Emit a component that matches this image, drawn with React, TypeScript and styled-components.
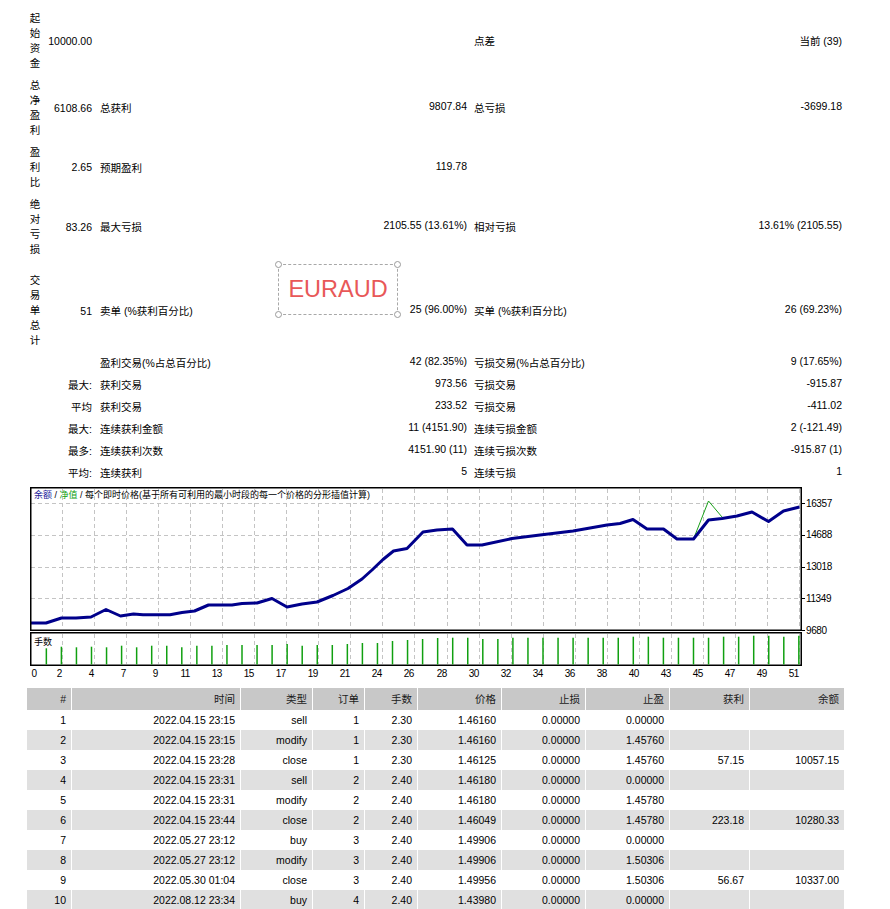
import React from "react";
import styled, { createGlobalStyle } from "styled-components";

const GlobalStyle = createGlobalStyle`
  html, body { margin: 0; padding: 0; background: #ffffff; }
  body {
    font-family: "Liberation Sans", "Noto Sans CJK SC", sans-serif;
    font-size: 10.5px;
    color: #000000;
  }
`;

const Page = styled.div`
  position: relative;
  width: 890px;
  padding-top: 7px;
`;

const Stats = styled.div`
  padding-left: 29px;
`;

const StatRow = styled.div<{ $gap?: number }>`
  display: grid;
  grid-template-columns: 12px 51px 375px 375px;
  align-items: center;
  min-height: 22px;
  margin-top: ${(p) => p.$gap ?? 0}px;
`;

const StackLabel = styled.div`
  line-height: 15px;
  padding: 3.5px 0;
  text-align: center;
  word-break: break-all;
`;

const Value = styled.div`
  text-align: right;
  white-space: nowrap;
`;

const Pair = styled.div<{ $pad: number }>`
  display: flex;
  justify-content: space-between;
  padding-left: ${(p) => p.$pad}px;
  white-space: nowrap;
`;

const Annotation = styled.div`
  position: absolute;
  left: 278px;
  top: 264px;
  width: 118px;
  height: 49px;
  border: 1px dashed #a8a8a8;
  display: flex;
  align-items: center;
  justify-content: center;
  font-family: "Liberation Sans", sans-serif;
  font-size: 23.5px;
  color: #e85858;
`;

const Handle = styled.span<{ $x: "l" | "r"; $y: "t" | "b" }>`
  position: absolute;
  width: 7px;
  height: 7px;
  border-radius: 50%;
  border: 1.3px solid #9a9a9a;
  background: #fff;
  box-sizing: border-box;
  ${(p) => (p.$x === "l" ? "left: -4px;" : "right: -4px;")}
  ${(p) => (p.$y === "t" ? "top: -4px;" : "bottom: -4px;")}
`;

const ChartSvg = styled.svg`
  display: block;
  width: 890px;
  height: 204px;
  font-family: "Liberation Sans", "Noto Sans CJK SC", sans-serif;
`;

const Table = styled.table`
  margin-left: 27px;
  border-collapse: separate;
  border-spacing: 0;
  width: 818px;
  table-layout: fixed;
  font-size: 10.5px;
`;

const Th = styled.th`
  background: #c8c8c8;
  line-height: 22px;
  height: 22px;
  font-weight: normal;
  text-align: right;
  padding: 0 5px 0 0;
  border-right: 1px solid #ffffff;
  color: #1a1a1a;
`;

const Tr = styled.tr<{ $alt: boolean }>`
  background: ${(p) => (p.$alt ? "#e0e0e0" : "#ffffff")};
`;

const Td = styled.td`
  line-height: 20px;
  height: 20px;
  padding: 0 5px 0 0;
  text-align: right;
  border-right: 1px solid #ffffff;
  white-space: nowrap;
`;

type StatDef = {
  stack?: string;
  value?: string;
  a: [string, string];
  b: [string, string];
  gap?: number;
};

const stats: StatDef[] = [
  { stack: "起始资金", value: "10000.00", a: ["", ""], b: ["点差", "当前 (39)"] },
  { stack: "总净盈利", value: "6108.66", a: ["总获利", "9807.84"], b: ["总亏损", "-3699.18"] },
  { stack: "盈利比", value: "2.65", a: ["预期盈利", "119.78"], b: ["", ""] },
  { stack: "绝对亏损", value: "83.26", a: ["最大亏损", "2105.55 (13.61%)"], b: ["相对亏损", "13.61% (2105.55)"] },
  { stack: "交易单总计", value: "51", a: ["卖单 (%获利百分比)", "25 (96.00%)"], b: ["买单 (%获利百分比)", "26 (69.23%)"], gap: 9.5 },
  { value: "", a: ["盈利交易(%占总百分比)", "42 (82.35%)"], b: ["亏损交易(%占总百分比)", "9 (17.65%)"] },
  { value: "最大:", a: ["获利交易", "973.56"], b: ["亏损交易", "-915.87"] },
  { value: "平均", a: ["获利交易", "233.52"], b: ["亏损交易", "-411.02"] },
  { value: "最大:", a: ["连续获利金额", "11 (4151.90)"], b: ["连续亏损金额", "2 (-121.49)"] },
  { value: "最多:", a: ["连续获利次数", "4151.90 (11)"], b: ["连续亏损次数", "-915.87 (1)"] },
  { value: "平均:", a: ["连续获利", "5"], b: ["连续亏损", "1"] },
];

const balance: [number, number][] = [
  [30, 623], [46, 623], [61.5, 618], [76, 618], [91, 617], [106, 609.5], [120.5, 616],
  [133.5, 614], [143, 614.8], [170, 614.8], [182, 612.5], [194.5, 611], [208.5, 605],
  [232, 605], [242, 603.5], [257, 603], [272, 598.5], [287, 607], [302, 604], [317, 602],
  [333, 595.5], [348, 588.5], [362, 579], [372, 570], [383, 559.5], [393.5, 551],
  [407, 548.5], [423, 532], [437, 530], [452.5, 529], [467, 545], [482, 545],
  [512, 538.5], [540, 535], [573, 531], [607, 525], [620, 523.5], [633, 519.5],
  [647, 529], [663.5, 529], [677, 539], [693.5, 539], [708.5, 520], [722, 518.5],
  [737, 516], [752, 512], [768.5, 521.5], [783.5, 511], [799.5, 507],
];

const equitySpike: [number, number][] = [[693.5, 539], [708.5, 501], [722, 517]];

const barTops: number[] = [
  648.3, 646.7, 647.3, 646.7, 647.3, 645.7, 647.3, 645.7, 645.7, 647.3, 645.7, 645.7, 645,
  645, 645, 645, 644, 645.7, 645, 645, 644, 643, 643, 641, 640, 639, 638,
  637.7, 637.7, 639, 639, 637.7, 637.7, 637.7, 637.7, 637.7, 637.7, 637.7, 637.7, 636.7,
  636.7, 637.7, 637.7, 637.7, 637.7, 636.7, 636.7, 635.7, 635.7, 636.7, 635.7,
];

const xLabels = ["2", "4", "7", "9", "11", "13", "15", "17", "19", "21", "24", "26", "28", "30", "32", "34", "36", "38", "40", "43", "45", "47", "49", "51"];

const yLabels: [string, number][] = [
  ["16357", 503],
  ["14688", 534.75],
  ["13018", 566.5],
  ["11349", 598.25],
  ["9680", 630],
];

const gridX = (k: number) => Math.round(30 + 32.04 * k) + 0.5;

const BalanceChart = () => (
  <ChartSvg viewBox="0 484 890 204">
    {yLabels.slice(0, 4).map(([, y]) => (
      <line key={`h${y}`} x1={31} x2={800} y1={Math.round(y) + 0.5} y2={Math.round(y) + 0.5} stroke="#c4c4c4" strokeDasharray="4 3" />
    ))}
    {xLabels.map((_, i) => (
      <g key={`v${i}`}>
        <line x1={gridX(i + 1)} x2={gridX(i + 1)} y1={489} y2={629} stroke="#c4c4c4" strokeDasharray="4 3" />
        <line x1={gridX(i + 1)} x2={gridX(i + 1)} y1={634} y2={664} stroke="#c4c4c4" strokeDasharray="4 3" />
      </g>
    ))}
    <text x={34} y={498} fontSize={9} fill="#000">
      <tspan fill="#1a1a9a">余额</tspan>
      <tspan> / </tspan>
      <tspan fill="#10a010">净值</tspan>
      <tspan> / 每个即时价格(基于所有可利用的最小时段的每一个价格的分形插值计算)</tspan>
    </text>
    <polyline points={equitySpike.map((p) => p.join(",")).join(" ")} fill="none" stroke="#1aa01a" strokeWidth={1} />
    <polyline points={balance.map((p) => p.join(",")).join(" ")} fill="none" stroke="#00008b" strokeWidth={3} strokeLinejoin="round" />
    <rect x={30.75} y={487.75} width={770.5} height={142.5} fill="none" stroke="#000" strokeWidth={1.5} />
    <rect x={30.75} y={632.75} width={770.5} height={32.5} fill="none" stroke="#000" strokeWidth={1.5} />
    <text x={34} y={645} fontSize={9} fill="#000">手数</text>
    {barTops.map((t, i) => {
      const x = 31.3 + 15.05 * (i + 1);
      return <line key={`b${i}`} x1={x} x2={x} y1={t} y2={664.5} stroke="#10a010" strokeWidth={1.5} />;
    })}
    {yLabels.map(([label, y]) => (
      <g key={label}>
        <line x1={802} x2={805} y1={Math.round(y) + 0.5} y2={Math.round(y) + 0.5} stroke="#000" />
        <text x={806} y={y + 3.6} fontSize={10} letterSpacing={-0.4} fill="#000">{label}</text>
      </g>
    ))}
    <text x={31.5} y={676.5} fontSize={10} fill="#000">0</text>
    {xLabels.map((l, i) => (
      <text key={`x${l}`} x={gridX(i + 1) - 0.5} y={676.5} fontSize={10} textAnchor="end" letterSpacing={-0.4} fill="#000">{l}</text>
    ))}
  </ChartSvg>
);

type Deal = string[];
const deals: Deal[] = [
  ["1", "2022.04.15 23:15", "sell", "1", "2.30", "1.46160", "0.00000", "0.00000", "", ""],
  ["2", "2022.04.15 23:15", "modify", "1", "2.30", "1.46160", "0.00000", "1.45760", "", ""],
  ["3", "2022.04.15 23:28", "close", "1", "2.30", "1.46125", "0.00000", "1.45760", "57.15", "10057.15"],
  ["4", "2022.04.15 23:31", "sell", "2", "2.40", "1.46180", "0.00000", "0.00000", "", ""],
  ["5", "2022.04.15 23:31", "modify", "2", "2.40", "1.46180", "0.00000", "1.45780", "", ""],
  ["6", "2022.04.15 23:44", "close", "2", "2.40", "1.46049", "0.00000", "1.45780", "223.18", "10280.33"],
  ["7", "2022.05.27 23:12", "buy", "3", "2.40", "1.49906", "0.00000", "0.00000", "", ""],
  ["8", "2022.05.27 23:12", "modify", "3", "2.40", "1.49906", "0.00000", "1.50306", "", ""],
  ["9", "2022.05.30 01:04", "close", "3", "2.40", "1.49956", "0.00000", "1.50306", "56.67", "10337.00"],
  ["10", "2022.08.12 23:34", "buy", "4", "2.40", "1.43980", "0.00000", "0.00000", "", ""],
];

const headers = ["#", "时间", "类型", "订单", "手数", "价格", "止损", "止盈", "获利", "余额"];
const widths = [45, 169, 72, 52, 53, 84, 84, 84, 80, 95];

export default function App() {
  return (
    <>
      <GlobalStyle />
      <Page>
        <Stats>
          {stats.map((s, i) => (
            <StatRow key={i} $gap={s.gap}>
              <StackLabel>{s.stack ?? ""}</StackLabel>
              <Value>{s.value}</Value>
              <Pair $pad={8}>
                <span>{s.a[0]}</span>
                <span>{s.a[1]}</span>
              </Pair>
              <Pair $pad={7}>
                <span>{s.b[0]}</span>
                <span>{s.b[1]}</span>
              </Pair>
            </StatRow>
          ))}
        </Stats>
        <Annotation>
          EURAUD
          <Handle $x="l" $y="t" />
          <Handle $x="r" $y="t" />
          <Handle $x="l" $y="b" />
          <Handle $x="r" $y="b" />
        </Annotation>
        <BalanceChart />
        <Table>
          <colgroup>
            {widths.map((w, i) => (
              <col key={i} style={{ width: w }} />
            ))}
          </colgroup>
          <thead>
            <tr>
              {headers.map((h) => (
                <Th key={h}>{h}</Th>
              ))}
            </tr>
          </thead>
          <tbody>
            {deals.map((d, i) => (
              <Tr key={d[0]} $alt={i % 2 === 1}>
                {d.map((c, j) => (
                  <Td key={j}>{c}</Td>
                ))}
              </Tr>
            ))}
          </tbody>
        </Table>
      </Page>
    </>
  );
}
